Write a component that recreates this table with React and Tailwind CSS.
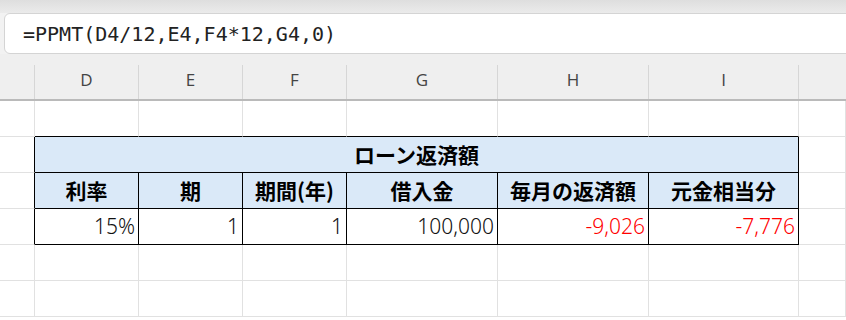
import React from "react";

const COLS = "grid grid-cols-[35px_104px_104px_104px_151px_151px_150px_1fr]";
const letters = ["", "D", "E", "F", "G", "H", "I", ""];
const heads = ["利率", "期", "期間(年)", "借入金", "毎月の返済額", "元金相当分"];
const values = [
  { v: "15%", red: false },
  { v: "1", red: false },
  { v: "1", red: false },
  { v: "100,000", red: false },
  { v: "-9,026", red: true },
  { v: "-7,776", red: true },
];

const jp = { fontFamily: '"Noto Sans CJK JP", "Noto Sans", sans-serif' };
const num = { fontFamily: '"Noto Sans", "Noto Sans CJK JP", sans-serif' };

function EmptyRow({ tableBelow }) {
  return (
    <div className={`${COLS} h-[36px]`}>
      {letters.map((_, i) => {
        const inTable = tableBelow && i >= 1 && i <= 6;
        return (
          <div
            key={i}
            className={`border-r border-b ${
              inTable ? "border-b-black border-r-[#e1e1e1]" : "border-[#e1e1e1]"
            }`}
          />
        );
      })}
    </div>
  );
}

export default function App() {
  return (
    <div className="w-[846px] h-[320px] overflow-hidden bg-white flex flex-col">
      {/* ribbon edge */}
      <div className="h-[13px] shrink-0 bg-gradient-to-b from-[#dedede] to-[#ebebeb]" />

      {/* formula bar */}
      <div className="h-[41px] shrink-0 bg-[#f2f2f2] pl-[4px] flex">
        <div className="flex-1 -mr-4 bg-white border border-[#d4d4d4] rounded-l-[6px] flex items-center pl-[18px]">
          <span
            className="text-[20px] text-[#222] leading-none"
            style={{ fontFamily: '"DejaVu Sans Mono", monospace' }}
          >
            =PPMT(D4/12,E4,F4*12,G4,0)
          </span>
        </div>
      </div>

      {/* column letters */}
      <div className={`${COLS} h-[47px] shrink-0 bg-[#efefef] border-b-2 border-[#bababa]`}>
        {letters.map((l, i) => (
          <div key={i} className="flex flex-col">
            <div className="h-[11px]" />
            <div
              className={`flex-1 flex items-center justify-center text-[17px] text-[#444] pb-[4px] ${
                i < 7 ? "border-r border-[#d6d6d6]" : ""
              }`}
              style={{ fontFamily: '"Open Sans", "Noto Sans", sans-serif' }}
            >
              {l}
            </div>
          </div>
        ))}
      </div>

      {/* sheet body */}
      <EmptyRow tableBelow />

      {/* title row */}
      <div className={`${COLS} h-[36px]`}>
        <div className="border-r border-b border-[#e1e1e1] border-r-black" />
        <div
          className="col-span-6 bg-[#dae9f8] border-r border-b border-black flex items-center justify-center text-[21px] font-bold text-black"
          style={jp}
        >
          ローン返済額
        </div>
        <div className="border-r border-b border-[#e1e1e1]" />
      </div>

      {/* header row */}
      <div className={`${COLS} h-[36px]`}>
        <div className="border-r border-b border-[#e1e1e1] border-r-black" />
        {heads.map((h) => (
          <div
            key={h}
            className="bg-[#dae9f8] border-r border-b border-black flex items-center justify-center text-[21px] font-bold text-black"
            style={jp}
          >
            {h}
          </div>
        ))}
        <div className="border-r border-b border-[#e1e1e1]" />
      </div>

      {/* data row */}
      <div className={`${COLS} h-[36px]`}>
        <div className="border-r border-b border-[#e1e1e1] border-r-black" />
        {values.map((c, i) => (
          <div
            key={i}
            className={`border-r border-b border-black flex items-center justify-end pr-[3px] text-[21px] font-light ${
              c.red ? "text-[#ff0000]" : "text-[#111]"
            }`}
            style={num}
          >
            {c.v}
          </div>
        ))}
        <div className="border-r border-b border-[#e1e1e1]" />
      </div>

      <EmptyRow />
      <EmptyRow />
    </div>
  );
}
